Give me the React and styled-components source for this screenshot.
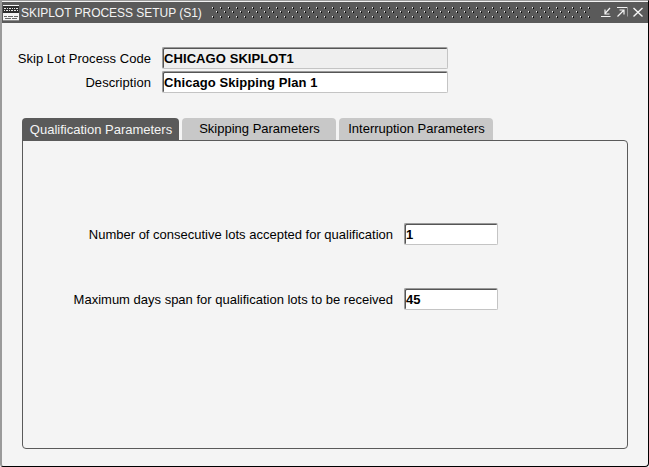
import React from "react";
import styled, { createGlobalStyle } from "styled-components";

const Global = createGlobalStyle`
  html, body { margin: 0; padding: 0; background: #f4f4f4; }
  * { box-sizing: border-box; }
`;

const Win = styled.div`
  position: relative;
  width: 649px;
  height: 467px;
  background: #f4f4f4;
  border-left: 2px solid #9a9a9a;
  border-right: 1px solid #000;
  border-bottom: 1px solid #000;
  border-top: 1px solid #9a9a9a;
  border-bottom-left-radius: 3px;
  border-bottom-right-radius: 4px;
  font-family: "Liberation Sans", Arial, sans-serif;
  font-size: 13px;
  color: #000;
  display: flex;
  flex-direction: column;
  overflow: hidden;
`;

const TitleBar = styled.div`
  height: 21px;
  margin-top: 1px;
  background: #5a5a5a;
  display: flex;
  align-items: center;
  flex: none;
`;

const AppIcon = styled.svg`
  width: 16px;
  height: 16px;
  margin-left: 1px;
  flex: none;
`;

const Title = styled.span`
  color: #f4f4f4;
  font-size: 12px;
  letter-spacing: -0.03px;
  margin-left: 2px;
  white-space: nowrap;
  flex: none;
`;

const Grip = styled.svg`
  flex: 1;
  min-width: 0;
  height: 11px;
  margin: 0 9px 0 10px;
`;

const WinButtons = styled.div`
  display: flex;
  align-items: center;
  gap: 3px;
  padding-right: 3px;
  flex: none;
`;

const WinIcon = styled.svg`
  width: 13px;
  height: 13px;
  stroke: #f4f4f4;
  fill: none;
  stroke-width: 1.2;
`;

const Header = styled.div`
  display: grid;
  grid-template-columns: 149px 286px;
  column-gap: 11px;
  row-gap: 2px;
  padding: 24px 0 0 0;
  align-items: center;
  flex: none;
`;

const Label = styled.label`
  text-align: right;
  white-space: nowrap;
  letter-spacing: ${(p) => (p.$loose ? "0.05px" : "0")};
`;

const Field = styled.div`
  height: 22px;
  background: ${(p) => (p.$readOnly ? "#efefef" : "#fff")};
  border: 1px solid #c4c4c4;
  border-top-color: #9a9a9a;
  border-left-color: #9a9a9a;
  box-shadow: inset 1px 1px 0 #555;
  border-radius: 2px;
  padding: 0 0 0 1px;
  font-weight: bold;
  display: flex;
  align-items: center;
  white-space: nowrap;
  letter-spacing: 0.08px;
`;

const Tabs = styled.div`
  display: flex;
  gap: 3px;
  margin: 25px 0 0 20px;
  height: 23px;
  flex: none;
  position: relative;
  z-index: 1;
`;

const Tab = styled.div`
  width: ${(p) => p.$w}px;
  height: ${(p) => (p.$active ? 23 : 22)}px;
  background: ${(p) => (p.$active ? "#5a5a5a" : "#c8c8c8")};
  color: ${(p) => (p.$active ? "#f4f4f4" : "#000")};
  border-radius: 4px 4px 0 0;
  display: flex;
  align-items: center;
  justify-content: center;
  white-space: nowrap;
  padding: 0 0 1px 1px;
`;

const Panel = styled.div`
  margin: -1px 0 0 20px;
  width: 606px;
  height: 309px;
  border: 1px solid #5a5a5a;
  border-radius: 0 4px 4px 4px;
  padding-top: 82px;
  display: grid;
  grid-template-columns: 370px 94px;
  grid-auto-rows: 22px;
  column-gap: 11px;
  row-gap: 43px;
  align-items: center;
  align-content: start;
`;

export default function App() {
  return (
    <>
      <Global />
      <Win>
        <TitleBar>
          <AppIcon viewBox="0 0 16 16" shapeRendering="crispEdges">
            <rect width="16" height="16" fill="#f4f4f4" />
            <rect x="0" y="1" width="16" height="7" fill="#2e2e2e" />
            <path d="M1 3h2M4 3h1M6 3h2M9 3h1M11 3h1M13 3h2M1 5h1M3 5h2M6 5h1M8 5h2M11 5h2M14 5h1" stroke="#e8e8e8" />
            <path d="M1 11h3M5 11h5M11 11h4M2 13h6M9 13h5" stroke="#666" />
            <rect x="0" y="15" width="16" height="1" fill="#8a8a8a" />
          </AppIcon>
          <Title>SKIPLOT PROCESS SETUP (S1)</Title>
          <Grip shapeRendering="crispEdges">
            <defs>
              <pattern id="grip" width="8" height="9" patternUnits="userSpaceOnUse">
                <rect x="0" y="0" width="1" height="1" fill="#f4f4f4" />
                <rect x="1" y="0" width="1" height="1" fill="#2a2a2a" />
                <rect x="0" y="1" width="1" height="1" fill="#8a8a8a" />
                <rect x="1" y="1" width="1" height="1" fill="#000" />
                <rect x="4" y="4" width="1" height="1" fill="#f4f4f4" />
                <rect x="5" y="4" width="1" height="1" fill="#2a2a2a" />
                <rect x="4" y="5" width="1" height="1" fill="#8a8a8a" />
                <rect x="5" y="5" width="1" height="1" fill="#000" />
              </pattern>
            </defs>
            <rect width="100%" height="100%" fill="url(#grip)" />
          </Grip>
          <WinButtons>
            <WinIcon viewBox="0 0 13 13">
              <path d="M1 10.5h9.5M10 2L5 7.5M5 3.5v4.5h4.5" />
            </WinIcon>
            <WinIcon viewBox="0 0 13 13">
              <path d="M1 1.5h10M1.5 10.5L7.5 4.5M3.5 4h4.5v4.5" />
              <path d="M11.5 1v9.5" stroke="#9a9a9a" strokeWidth="1" />
            </WinIcon>
            <WinIcon viewBox="0 0 13 13">
              <path d="M1.5 2l9 8.5M10.5 2l-9 8.5" strokeWidth="1.4" />
            </WinIcon>
          </WinButtons>
        </TitleBar>
        <Header>
          <Label $loose>Skip Lot Process Code</Label>
          <Field $readOnly>CHICAGO SKIPLOT1</Field>
          <Label $loose>Description</Label>
          <Field>Chicago Skipping Plan 1</Field>
        </Header>
        <Tabs>
          <Tab $active $w={157}>Qualification Parameters</Tab>
          <Tab $w={154}>Skipping Parameters</Tab>
          <Tab $w={154}>Interruption Parameters</Tab>
        </Tabs>
        <Panel>
          <Label>Number of consecutive lots accepted for qualification</Label>
          <Field>1</Field>
          <Label>Maximum days span for qualification lots to be received</Label>
          <Field>45</Field>
        </Panel>
      </Win>
    </>
  );
}
